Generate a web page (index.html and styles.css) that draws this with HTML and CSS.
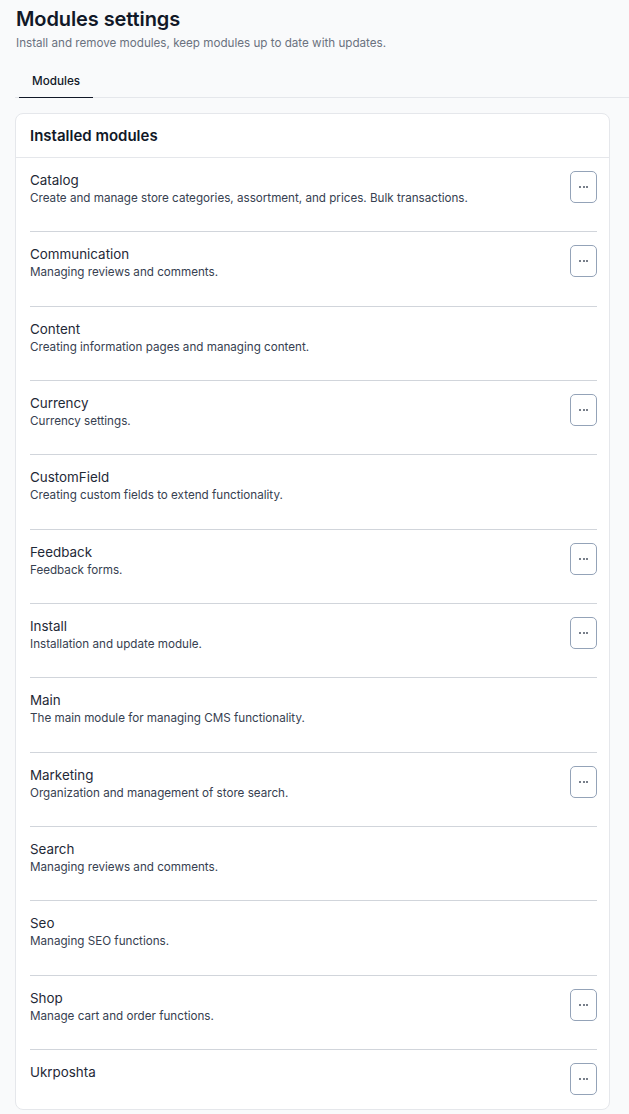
FILE: index.html
```html
<!DOCTYPE html>
<html>
<head>
<meta charset="utf-8">
<link rel="stylesheet" href="styles.css">
</head>
<body>
<div class="page">
  <header class="head">
    <h1 class="title">Modules settings</h1>
    <p class="subtitle">Install and remove modules, keep modules up to date with updates.</p>
  </header>
  <nav class="tabs">
    <div class="tab active">Modules</div>
  </nav>
  <section class="card">
    <h2 class="card-title">Installed modules</h2>
    <div class="list">
      <div class="row"><div class="text"><div class="name">Catalog</div><div class="desc">Create and manage store categories, assortment, and prices. Bulk transactions.</div></div><button class="more"><span></span><span></span><span></span></button></div>
      <div class="row"><div class="text"><div class="name">Communication</div><div class="desc">Managing reviews and comments.</div></div><button class="more"><span></span><span></span><span></span></button></div>
      <div class="row"><div class="text"><div class="name">Content</div><div class="desc">Creating information pages and managing content.</div></div></div>
      <div class="row"><div class="text"><div class="name">Currency</div><div class="desc">Currency settings.</div></div><button class="more"><span></span><span></span><span></span></button></div>
      <div class="row"><div class="text"><div class="name">CustomField</div><div class="desc">Creating custom fields to extend functionality.</div></div></div>
      <div class="row"><div class="text"><div class="name">Feedback</div><div class="desc">Feedback forms.</div></div><button class="more"><span></span><span></span><span></span></button></div>
      <div class="row"><div class="text"><div class="name">Install</div><div class="desc">Installation and update module.</div></div><button class="more"><span></span><span></span><span></span></button></div>
      <div class="row"><div class="text"><div class="name">Main</div><div class="desc">The main module for managing CMS functionality.</div></div></div>
      <div class="row"><div class="text"><div class="name">Marketing</div><div class="desc">Organization and management of store search.</div></div><button class="more"><span></span><span></span><span></span></button></div>
      <div class="row"><div class="text"><div class="name">Search</div><div class="desc">Managing reviews and comments.</div></div></div>
      <div class="row"><div class="text"><div class="name">Seo</div><div class="desc">Managing SEO functions.</div></div></div>
      <div class="row"><div class="text"><div class="name">Shop</div><div class="desc">Manage cart and order functions.</div></div><button class="more"><span></span><span></span><span></span></button></div>
      <div class="row last"><div class="text"><div class="name">Ukrposhta</div></div><button class="more"><span></span><span></span><span></span></button></div>
    </div>
  </section>
</div>
</body>
</html>
```
FILE: styles.css
```css
* { box-sizing: border-box; }
html, body { margin: 0; padding: 0; }
body {
  background: #f9fafb;
  font-family: Inter, "Noto Sans", sans-serif;
  color: #111827;
}
.page { padding: 6px 0 0 15px; }
.head { padding-left: 1px; }
.title {
  margin: 0;
  font-size: 20px;
  line-height: 26px;
  font-weight: 600;
  color: #111827;
  letter-spacing: -0.1px;
}
.subtitle {
  margin: 3px 0 0;
  font-size: 11.65px;
  line-height: 16px;
  color: #6b7280;
}
.tabs {
  margin-top: 18px;
  border-bottom: 1px solid #e5e7eb;
  display: flex;
  padding-left: 4px;
}
.tab {
  font-size: 11.7px;
  font-weight: 500;
  line-height: 16px;
  padding: 4px 13px 8px;
  color: #111827;
}
.tab.active { border-bottom: 1px solid #111827; margin-bottom: -1px; }
.card {
  margin: 15px 19px 0 0;
  background: #fff;
  border: 1px solid #e5e7eb;
  border-radius: 8px;
}
.card-title {
  margin: 0;
  padding: 12px 14px 11px;
  font-size: 15px;
  line-height: 20px;
  font-weight: 600;
  color: #111827;
  border-bottom: 1px solid #e5e7eb;
}
.list { padding: 0 12px 0 14px; }
.row {
  display: flex;
  justify-content: space-between;
  align-items: flex-start;
  padding: 13px 0 14.33px;
  border-bottom: 1px solid #d1d5db;
}
.row.last { border-bottom: none; }
.text { padding-bottom: 10px; }
.name {
  font-size: 13.4px;
  line-height: 18px;
  color: #1f2937;
}
.desc {
  font-size: 11.65px;
  line-height: 18px;
  color: #374151;
}
.more {
  width: 27px;
  height: 32px;
  border: 1px solid #94a3b8;
  border-radius: 5px;
  background: #fff;
  display: flex;
  align-items: center;
  justify-content: center;
  gap: 1.5px;
  padding: 0;
  flex: none;
}
.more span {
  width: 2px;
  height: 2px;
  border-radius: 50%;
  background: #4b5563;
}
```
